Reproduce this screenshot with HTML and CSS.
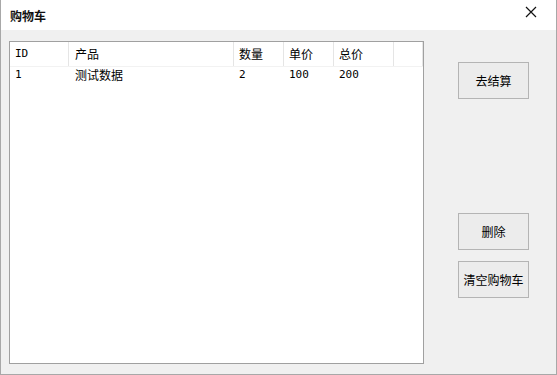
FILE: index.html
```html
<!DOCTYPE html>
<html>
<head>
<meta charset="utf-8">
<link rel="stylesheet" href="styles.css">
</head>
<body>
<div class="window">
  <div class="titlebar">
    <span class="title">购物车</span>
    <span class="close">
      <svg width="12" height="12" viewBox="0 0 12 12"><path d="M1 1 L11 11 M11 1 L1 11" stroke="#111" stroke-width="1.2" fill="none"/></svg>
    </span>
  </div>
  <div class="body">
    <div class="listbox">
      <div class="row header">
        <div class="c c1">ID</div>
        <div class="c c2">产品</div>
        <div class="c c3">数量</div>
        <div class="c c4">单价</div>
        <div class="c c5">总价</div>
        <div class="c c6"></div>
      </div>
      <div class="row item">
        <div class="c c1 num">1</div>
        <div class="c c2">测试数据</div>
        <div class="c c3 num">2</div>
        <div class="c c4 num">100</div>
        <div class="c c5 num">200</div>
      </div>
    </div>
    <div class="buttons">
      <button class="btn">去结算</button>
      <div class="spacer"></div>
      <button class="btn">删除</button>
      <button class="btn">清空购物车</button>
    </div>
  </div>
</div>
</body>
</html>
```

FILE: styles.css
```css
html, body {
  margin: 0;
  padding: 0;
  background: #f0f0f0;
}
.window {
  width: 555px;
  height: 374px;
  border-left: 1px solid #a8a8a8;
  border-right: 1px solid #a8a8a8;
  border-bottom: 1px solid #a8a8a8;
  background: #f0f0f0;
  font-family: "Noto Sans CJK SC", sans-serif;
  font-size: 12px;
  color: #000;
  display: flex;
  flex-direction: column;
}
.titlebar {
  height: 30px;
  background: #fff;
  display: flex;
  align-items: center;
  justify-content: space-between;
  padding: 0 19px 0 9px;
}
.title {
  font-weight: 600;
  font-size: 12px;
  margin-top: 1px;
  color: #111;
}
.close {
  display: flex;
  margin-top: -6px;
}
.body {
  display: flex;
  padding: 11px 0 0 8px;
}
.listbox {
  width: 413px;
  height: 321px;
  border: 1px solid #a0a0a0;
  background: #fff;
}
.row {
  display: flex;
}
.header {
  height: 24px;
  align-items: center;
  border-bottom: 1px solid #f2f2f2;
}
.header .c {
  height: 24px;
  line-height: 24px;
  border-right: 1px solid #e5e5e5;
}
.item {
  height: 16px;
  line-height: 16px;
}
.c {
  box-sizing: border-box;
  padding-left: 5px;
  white-space: nowrap;
}
.c1 { width: 59px; }
.c2 { width: 165px; padding-left: 6px; }
.c3 { width: 50px; }
.c4 { width: 50px; }
.c5 { width: 60px; }
.c6 { width: 29px; }
.num, .header .c1 {
  font-family: "DejaVu Sans Mono", monospace;
  font-size: 11px;
}
.buttons {
  display: flex;
  flex-direction: column;
  margin-left: 34px;
  padding-top: 21px;
}
.btn {
  width: 71px;
  height: 37px;
  border: 1px solid #b4b4b4;
  background: #ececec;
  font-family: "Noto Sans CJK SC", sans-serif;
  font-size: 12px;
  color: #000;
  padding: 0;
  margin: 0;
}
.spacer {
  height: 114px;
}
.btn + .btn {
  margin-top: 11px;
}
```
